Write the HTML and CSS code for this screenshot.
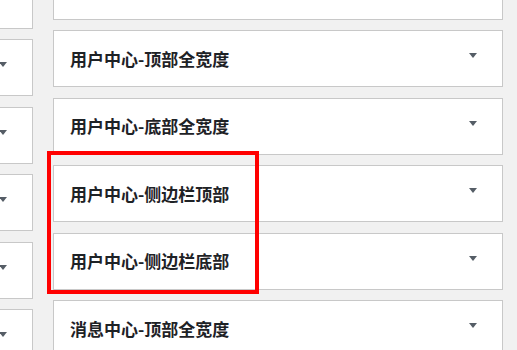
FILE: index.html
```html
<!DOCTYPE html>
<html lang="zh-CN">
<head>
  <meta charset="UTF-8" />
  <meta name="viewport" content="width=device-width, initial-scale=1.0"/>
  <title>小工具</title>
  <link rel="stylesheet" href="styles.css">
</head>
<body>
  <div class="sidebars">
    <div class="column column-left">
      <div class="widget-area"><span class="toggle"></span></div>
      <div class="widget-area"><span class="toggle"></span></div>
      <div class="widget-area"><span class="toggle"></span></div>
      <div class="widget-area"><span class="toggle"></span></div>
      <div class="widget-area"><span class="toggle"></span></div>
      <div class="widget-area"><span class="toggle"></span></div>
    </div>

    <div class="column column-right">
      <div class="widget-area"><span class="toggle"></span></div>
      <div class="widget-area"><h3 class="area-title">用户中心-顶部全宽度</h3><span class="toggle"></span></div>
      <div class="widget-area"><h3 class="area-title">用户中心-底部全宽度</h3><span class="toggle"></span></div>
      <div class="widget-area"><h3 class="area-title">用户中心-侧边栏顶部</h3><span class="toggle"></span></div>
      <div class="widget-area"><h3 class="area-title">用户中心-侧边栏底部</h3><span class="toggle"></span></div>
      <div class="widget-area"><h3 class="area-title">消息中心-顶部全宽度</h3><span class="toggle"></span></div>
    </div>
  </div>

  <div class="highlight"></div>
</body>
</html>
```

FILE: styles.css
```css
body {
  margin: 0;
  background: #f1f1f1;
  font-family: "Noto Sans CJK SC", "Noto Sans", sans-serif;
  color: #1e2226;
  overflow: hidden;
}

.sidebars {
  display: flex;
  gap: 20px;
  margin-top: -37.5px;
}

.column {
  display: flex;
  flex-direction: column;
  gap: 10.5px;
  flex-shrink: 0;
}

.column-left {
  width: 240px;
  margin-left: -207px;
  padding-top: 9px;
}

.column-right {
  width: 450px;
}

.widget-area {
  box-sizing: border-box;
  height: 57px;
  background: #fff;
  border: 1px solid #c8c8c8;
  display: flex;
  align-items: center;
  justify-content: space-between;
  padding: 0 25px 0 16px;
}

.area-title {
  margin: 0;
  font-size: 17px;
  font-weight: bold;
  line-height: 20px;
}

.toggle {
  width: 0;
  height: 0;
  border-top: 5px solid #555d66;
  border-left: 4px solid transparent;
  border-right: 4px solid transparent;
  margin-left: auto;
  margin-bottom: 6px;
}

.highlight {
  position: absolute;
  left: 47px;
  top: 151px;
  width: 212px;
  height: 143px;
  box-sizing: border-box;
  border: 4px solid #ff0000;
}
```
